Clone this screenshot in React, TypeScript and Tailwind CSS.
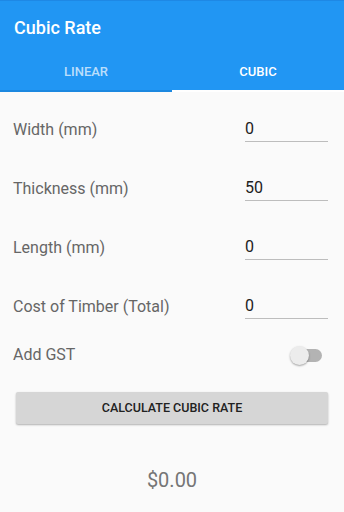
import React from "react";

const font = { fontFamily: "Roboto, 'Noto Sans', sans-serif" };

function Row({ label, value }: { label: string; value: string }) {
  return (
    <div className="flex h-[59px] items-center justify-between">
      <span className="text-[16px] text-[#666666]">{label}</span>
      <div className="mt-[1px] w-[83px] border-b border-[#bdbdbd] pb-[2px] text-[16px] leading-[20px] text-[#212121]">
        {value}
      </div>
    </div>
  );
}

export default function App() {
  return (
    <div className="flex h-[512px] w-[344px] flex-col overflow-hidden bg-[#fafafa]" style={font}>
      <div className="bg-[#2196f3]">
        <div className="h-px bg-[#1e88e5]" />
        <div className="flex h-[53px] items-center px-[14px] text-[18px] font-medium text-white">
          Cubic Rate
        </div>
        <div className="flex h-[38px]">
          <div className="flex flex-1 flex-col">
            <div className="flex flex-1 items-center justify-center text-[13px] font-medium text-white/70">
              LINEAR
            </div>
            <div className="h-[2px] bg-[#1c88e0]" />
          </div>
          <div className="flex flex-1 flex-col">
            <div className="flex flex-1 items-center justify-center text-[13px] font-medium text-white">
              CUBIC
            </div>
            <div className="h-[2px] bg-white" />
          </div>
        </div>
      </div>
      <div className="flex flex-col pl-[13px] pr-[16px] pt-[8px]">
        <Row label="Width (mm)" value="0" />
        <Row label="Thickness (mm)" value="50" />
        <Row label="Length (mm)" value="0" />
        <Row label="Cost of Timber (Total)" value="0" />
        <div className="flex h-[38px] items-center justify-between">
          <span className="text-[16px] text-[#666666]">Add GST</span>
          <div className="relative mr-[6px] h-[13px] w-[30px] rounded-full bg-[#b3b3b3]">
            <div className="absolute left-[-2px] top-[-3px] h-[19px] w-[19px] rounded-full bg-[#ececec] shadow-[0_1px_2px_rgba(0,0,0,0.35)]" />
          </div>
        </div>
        <div className="ml-[3px] mt-[18px] flex h-[32px] items-center justify-center rounded-[2px] bg-[#d6d6d6] text-[12.5px] font-medium text-[#212121] shadow-[0_1px_2px_rgba(0,0,0,0.3)]">
          CALCULATE CUBIC RATE
        </div>
      </div>
      <div className="mt-[42px] text-center text-[20px] leading-[28px] text-[#757575]">$0.00</div>
    </div>
  );
}
